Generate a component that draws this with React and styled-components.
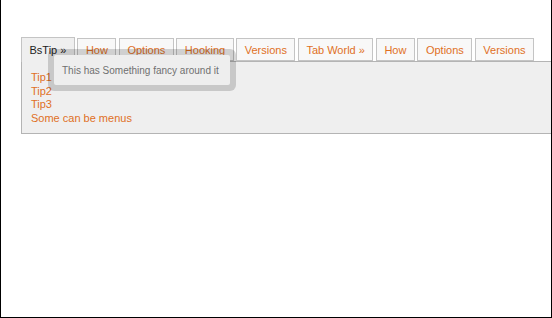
import React from 'react'
import styled, { createGlobalStyle } from 'styled-components'

const GlobalStyle = createGlobalStyle`
  html, body {
    margin: 0;
    padding: 0;
    background: #fff;
  }
  body {
    font-family: 'Liberation Sans', Arial, sans-serif;
  }
`

const tabs = [
  { label: 'BsTip »', active: true },
  { label: 'How' },
  { label: 'Options' },
  { label: 'Hooking' },
  { label: 'Versions' },
  { label: 'Tab World »' },
  { label: 'How' },
  { label: 'Options' },
  { label: 'Versions' },
]

const links = ['Tip1', 'Tip2', 'Tip3', 'Some can be menus']

const App = () => {
  return (
    <Page>
      <GlobalStyle />
      <TabWidget>
        <TabBar>
          {tabs.map((t, i) => (
            <Tab key={i} $active={t.active}>{t.label}</Tab>
          ))}
        </TabBar>
        <Panel>
          {links.map((l) => (
            <LinkItem key={l} href="#">{l}</LinkItem>
          ))}
        </Panel>
        <Tooltip>
          <TooltipInner>This has Something fancy around it</TooltipInner>
        </Tooltip>
      </TabWidget>
    </Page>
  )
}

const Page = styled.div`
  width: 552px;
  height: 318px;
  box-sizing: border-box;
  border-left: 1px solid #000;
  border-right: 1px solid #000;
  border-bottom: 1px solid #000;
  padding: 37px 0 0 20px;
  overflow: hidden;
`

const TabWidget = styled.div`
  position: relative;
  width: 540px;
`

const TabBar = styled.div`
  display: flex;
  align-items: flex-end;
  gap: 2.5px;
  height: 24px;
  position: relative;
  z-index: 1;
`

const Tab = styled.div`
  box-sizing: border-box;
  height: ${(p) => (p.$active ? '25px' : '23px')};
  margin-bottom: ${(p) => (p.$active ? '-1px' : '0')};
  padding: 0 7.5px;
  display: flex;
  align-items: center;
  font-size: 11px;
  color: ${(p) => (p.$active ? '#222' : '#e0701f')};
  background: ${(p) => (p.$active ? '#efefef' : '#f8f8f8')};
  border: 1px solid #c4c4c4;
  border-bottom: ${(p) => (p.$active ? 'none' : '1px solid #c4c4c4')};
  white-space: nowrap;
`

const Panel = styled.div`
  box-sizing: border-box;
  height: 73px;
  background: #efefef;
  border: 1px solid #b4b4b4;
  border-right: none;
  padding: 9px 9px;
  display: flex;
  flex-direction: column;
  align-items: flex-start;
`

const LinkItem = styled.a`
  font-size: 11px;
  line-height: 13.7px;
  color: #e0701f;
  text-decoration: none;
`

const Tooltip = styled.div`
  position: absolute;
  left: 27px;
  top: 12px;
  z-index: 2;
  padding: 6px;
  border-radius: 6px;
  background: rgba(0, 0, 0, 0.16);
`

const TooltipInner = styled.div`
  width: 176px;
  height: 30px;
  box-sizing: border-box;
  background: #eeeeee;
  border-radius: 2px;
  padding-left: 8px;
  display: flex;
  align-items: center;
  font-size: 10px;
  color: #707070;
  white-space: nowrap;
`

export default App
